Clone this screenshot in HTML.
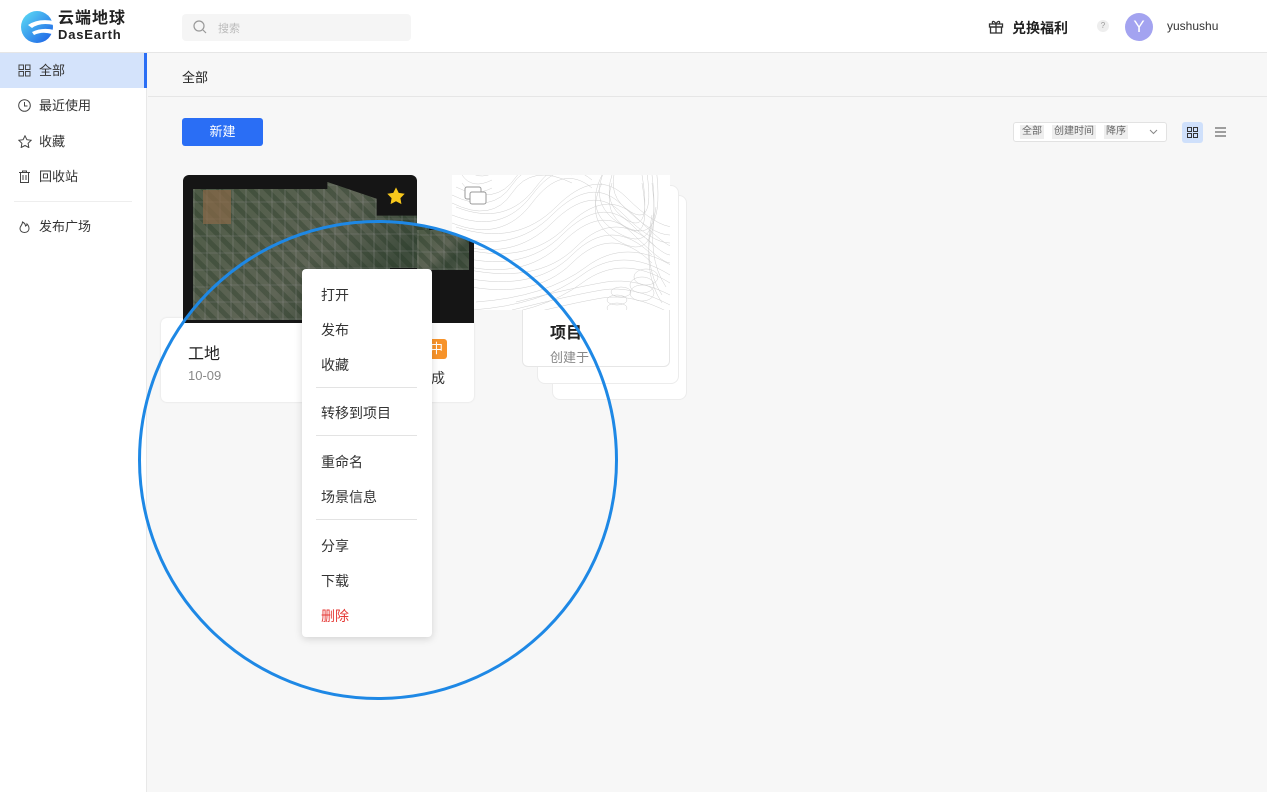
<!DOCTYPE html>
<html><head><meta charset="utf-8"><style>
*{margin:0;padding:0;box-sizing:border-box}
body{width:1267px;height:792px;overflow:hidden;background:#f7f7f7;font-family:"Liberation Sans","Noto Sans CJK SC",sans-serif;color:#333;position:relative}
.a{position:absolute}
.hdr{left:0;top:0;width:1267px;height:53px;background:#fff;border-bottom:1px solid #e6e6e6}
.side{left:0;top:53px;width:147px;height:739px;background:#fff;border-right:1px solid #e8e8e8}
.nav{position:absolute;left:0;width:147px;height:35px;font-size:13px;line-height:35px;padding-left:39px;color:#333}
.nav svg{position:absolute;left:18px;top:11px}
.mi{position:absolute;left:321px;font-size:14px;color:#333}
.dv{position:absolute;left:316px;width:101px;height:1px;background:#e3e3e3}
.aer{background:
repeating-linear-gradient(90deg,rgba(150,150,150,.18) 0 2px,transparent 2px 13px),
repeating-linear-gradient(0deg,rgba(140,140,140,.16) 0 2px,transparent 2px 17px),
repeating-linear-gradient(45deg,rgba(30,50,30,.3) 0 5px,transparent 5px 11px),
linear-gradient(135deg,#4d5a45,#56604e 30%,#5f6556 50%,#3e4c3c 70%,#4d5848)}
</style></head><body>
<div class="a hdr"></div>
<svg class="a" style="left:20px;top:10px" width="36" height="34" viewBox="0 0 36 34"><defs><linearGradient id="g" x1="0" y1="0" x2="1" y2="1"><stop offset="0" stop-color="#5ee0f5"/><stop offset="1" stop-color="#1a5ce6"/></linearGradient></defs><circle cx="17" cy="17" r="16" fill="url(#g)"/><path d="M8 15 Q18 8 34 11 L34 15 Q20 12 12 18Z" fill="#fff"/><path d="M12 22 Q22 17 34 20 L32 24 Q22 21 14 25Z" fill="#fff"/></svg>
<div class="a" style="left:58px;top:9px;font-size:16px;line-height:20px;font-weight:bold;color:#222;letter-spacing:1px">云端地球</div>
<div class="a" style="left:58px;top:27px;font-size:13px;line-height:15px;font-weight:bold;color:#222;letter-spacing:.8px">DasEarth</div>
<div class="a" style="left:182px;top:14px;width:229px;height:27px;background:#f5f5f5;border-radius:4px"></div>
<svg class="a" style="left:193px;top:20px" width="14" height="14" viewBox="0 0 14 14" fill="none" stroke="#999" stroke-width="1.2"><circle cx="6" cy="6" r="5"/><path d="M10 10l3 3"/></svg>
<div class="a" style="left:218px;top:20px;font-size:11px;color:#bbb">搜索</div>
<svg class="a" style="left:988px;top:19px" width="16" height="15" viewBox="0 0 16 15" fill="none" stroke="#333" stroke-width="1.3"><rect x="1.5" y="5" width="13" height="3"/><rect x="2.5" y="8" width="11" height="6"/><path d="M8 5v9M8 5C6 1 3 2 5 5M8 5c2-4 5-3 3 0"/></svg>
<div class="a" style="left:1012px;top:18px;font-size:14px;font-weight:bold;color:#222">兑换福利</div>
<div class="a" style="left:1097px;top:20px;width:12px;height:12px;border-radius:6px;background:#eee;font-size:8px;color:#999;text-align:center;line-height:12px">?</div>
<div class="a" style="left:1125px;top:13px;width:28px;height:28px;border-radius:14px;background:#a3a3f0;color:#fff;font-size:17px;text-align:center;line-height:28px">Y</div>
<div class="a" style="left:1167px;top:19px;font-size:12px;color:#333">yushushu</div>

<div class="a side">
<div class="nav" style="top:0;background:#d4e3fb;border-right:3px solid #2a6ef5"><svg width="13" height="13" viewBox="0 0 13 13" fill="none" stroke="#444"><rect x="1" y="1" width="4.5" height="4.5"/><rect x="7.5" y="1" width="4.5" height="4.5"/><rect x="1" y="7.5" width="4.5" height="4.5"/><rect x="7.5" y="7.5" width="4.5" height="4.5"/></svg>全部</div>
<div class="nav" style="top:35px"><svg width="13" height="13" viewBox="0 0 13 13" fill="none" stroke="#444"><circle cx="6.5" cy="6.5" r="5.8"/><path d="M6.5 3v4h3"/></svg>最近使用</div>
<div class="nav" style="top:71px"><svg width="14" height="13" viewBox="0 0 14 13" fill="none" stroke="#444"><path d="M7 .8l1.9 3.9 4.2.6-3 3 .7 4.2L7 10.5 3.2 12.5l.7-4.2-3-3 4.2-.6z"/></svg>收藏</div>
<div class="nav" style="top:106px"><svg width="13" height="13" viewBox="0 0 13 13" fill="none" stroke="#444"><path d="M1 2.5h11M4.5 2.5V1h4v1.5M2.5 2.5v10h8v-10M5 5v5M8 5v5"/></svg>回收站</div>
<div class="a" style="left:14px;top:148px;width:118px;height:1px;background:#eee"></div>
<div class="nav" style="top:156px"><svg width="13" height="13" viewBox="0 0 13 13" fill="none" stroke="#444"><path d="M6.5 12.5c-3 0-4.5-2-4.5-4 0-2.5 2.5-3.5 2.5-6.5 2 1 3 2.5 3 4 1-.5 1.5-1.5 1.5-2 1.5 1.5 2 3 2 4.5 0 2-1.5 4-4.5 4z"/></svg>发布广场</div>
</div>

<div class="a" style="left:148px;top:96px;width:1119px;height:1px;background:#e6e6e6"></div>
<div class="a" style="left:182px;top:67px;font-size:13px;color:#222">全部</div>
<div class="a" style="left:182px;top:118px;width:81px;height:28px;background:#2a6ef5;border-radius:3px;color:#fff;font-size:13px;text-align:center;line-height:28px">新建</div>

<div class="a" style="left:1013px;top:122px;width:154px;height:20px;border:1px solid #e2e2e2;border-radius:3px;background:#fff"></div>
<div class="a" style="left:1020px;top:125px;font-size:10px;color:#666;background:#eee;padding:1px 2px;line-height:12px">全部</div>
<div class="a" style="left:1052px;top:125px;font-size:10px;color:#666;background:#eee;padding:1px 2px;line-height:12px">创建时间</div>
<div class="a" style="left:1104px;top:125px;font-size:10px;color:#666;background:#eee;padding:1px 2px;line-height:12px">降序</div>
<svg class="a" style="left:1149px;top:129px" width="9" height="6" viewBox="0 0 9 6" fill="none" stroke="#888"><path d="M1 1l3.5 3.5L8 1"/></svg>
<div class="a" style="left:1182px;top:122px;width:21px;height:21px;background:#cfe0fb;border-radius:3px"></div>
<svg class="a" style="left:1187px;top:127px" width="11" height="11" viewBox="0 0 11 11" fill="none" stroke="#333"><rect x=".5" y=".5" width="4" height="4"/><rect x="6.5" y=".5" width="4" height="4"/><rect x=".5" y="6.5" width="4" height="4"/><rect x="6.5" y="6.5" width="4" height="4"/></svg>
<svg class="a" style="left:1215px;top:127px" width="11" height="10" viewBox="0 0 11 10" stroke="#444"><path d="M0 1h11M0 5h11M0 9h11"/></svg>

<!-- card stack -->
<div class="a" style="left:552px;top:195px;width:135px;height:205px;background:#fff;border:1px solid #ececec;border-radius:8px"></div>
<div class="a" style="left:537px;top:185px;width:142px;height:199px;background:#fff;border:1px solid #ececec;border-radius:8px"></div>
<div class="a" style="left:522px;top:175px;width:148px;height:192px;background:#fff;border:1px solid #e6e6e6;border-radius:6px"></div>
<svg class="a" style="left:452px;top:175px" width="218" height="135" viewBox="0 0 218 135" fill="none" stroke="#cfcfcf" stroke-width=".5">
<rect width="218" height="135" fill="#fff" stroke="none"/>
<g id="c"><path d="M0 20Q40 40 60 10T120 0"/><path d="M0 40Q50 60 80 20T140 5"/><path d="M0 60Q60 80 100 40T170 30 218 60"/><path d="M0 80Q70 100 110 60T180 50 218 80"/><path d="M0 100Q80 120 120 80T200 80"/><path d="M20 135Q90 130 130 100T218 100"/><path d="M150 0Q130 40 170 60T200 0"/><path d="M160 0Q150 30 175 45T190 0"/><path d="M200 40Q190 90 210 120"/><path d="M60 135Q120 120 150 115T218 130"/><path d="M10 0Q20 15 40 5"/><ellipse cx="190" cy="110" rx="12" ry="8"/><ellipse cx="165" cy="125" rx="10" ry="5"/></g>
<use href="#c" transform="translate(0 8)"/><use href="#c" transform="translate(4 -8)"/></svg>
<svg class="a" style="left:463px;top:186px" width="26" height="20" viewBox="0 0 26 20" fill="none" stroke="#999"><rect x="2" y="1" width="16" height="12" rx="2" fill="#fff"/><rect x="7" y="6" width="16" height="12" rx="2" fill="#fff"/></svg>
<div class="a" style="left:550px;top:319px;font-size:16px;font-weight:bold;color:#222">项目</div>
<div class="a" style="left:550px;top:347px;font-size:13px;color:#888">创建于</div>

<!-- card 1 -->
<div class="a" style="left:161px;top:318px;width:313px;height:84px;background:#fff;border-radius:6px;box-shadow:0 0 2px rgba(0,0,0,.12)"></div>
<div class="a" style="left:183px;top:175px;width:234px;height:148px;background:#151515;border-radius:6px 6px 0 0"></div>
<div class="a aer" style="left:193px;top:182px;width:224px;height:140px;clip-path:polygon(0 5%,60% 5%,60% 0,82% 12%,82% 24%,100% 24%,100% 100%,0 100%)"></div>
<div class="a" style="left:203px;top:190px;width:28px;height:34px;background:#8a6a48;opacity:.7"></div>
<div class="a" style="left:0;top:0;width:1267px;height:792px;clip-path:circle(238px at 378px 460px)">
 <div class="a" style="left:161px;top:175px;width:313px;height:148px;background:#151515"></div>
 <div class="a aer" style="left:165px;top:190px;width:300px;height:130px;clip-path:polygon(0 0,88% 0,88% 60%,75% 60%,75% 100%,0 100%)"></div>
 <div class="a" style="left:430px;top:200px;width:44px;height:110px;background:#151515"></div>
 <div class="a aer" style="left:417px;top:230px;width:52px;height:40px"></div>
</div>
<svg class="a" style="left:386px;top:186px" width="20" height="19" viewBox="0 0 14 13"><path d="M7 .8l1.9 3.9 4.2.6-3 3 .7 4.2L7 10.5 3.2 12.5l.7-4.2-3-3 4.2-.6z" fill="#f8c81c"/></svg>
<div class="a" style="left:188px;top:340px;font-size:16px;color:#222">工地</div>
<div class="a" style="left:188px;top:368px;font-size:13px;color:#888">10-09</div>
<div class="a" style="left:426px;top:339px;width:21px;height:20px;background:#f7932a;border-radius:3px;color:#fff;font-size:13px;line-height:20px;text-align:center">中</div>
<div class="a" style="left:431px;top:368px;font-size:14px;color:#333">成</div>

<svg class="a" style="left:0;top:0" width="1267" height="792"><circle cx="378" cy="460" r="238.5" fill="none" stroke="#1e88e5" stroke-width="3"/></svg>

<div class="a" style="left:302px;top:269px;width:130px;height:368px;background:#fff;border-radius:4px;box-shadow:0 2px 8px rgba(0,0,0,.15)"></div>
<div class="mi" style="top:285px">打开</div>
<div class="mi" style="top:320px">发布</div>
<div class="mi" style="top:355px">收藏</div>
<div class="dv" style="top:387px"></div>
<div class="mi" style="top:403px">转移到项目</div>
<div class="dv" style="top:435px"></div>
<div class="mi" style="top:452px">重命名</div>
<div class="mi" style="top:487px">场景信息</div>
<div class="dv" style="top:519px"></div>
<div class="mi" style="top:536px">分享</div>
<div class="mi" style="top:571px">下载</div>
<div class="mi" style="top:606px;color:#e53935">删除</div>
</body></html>
